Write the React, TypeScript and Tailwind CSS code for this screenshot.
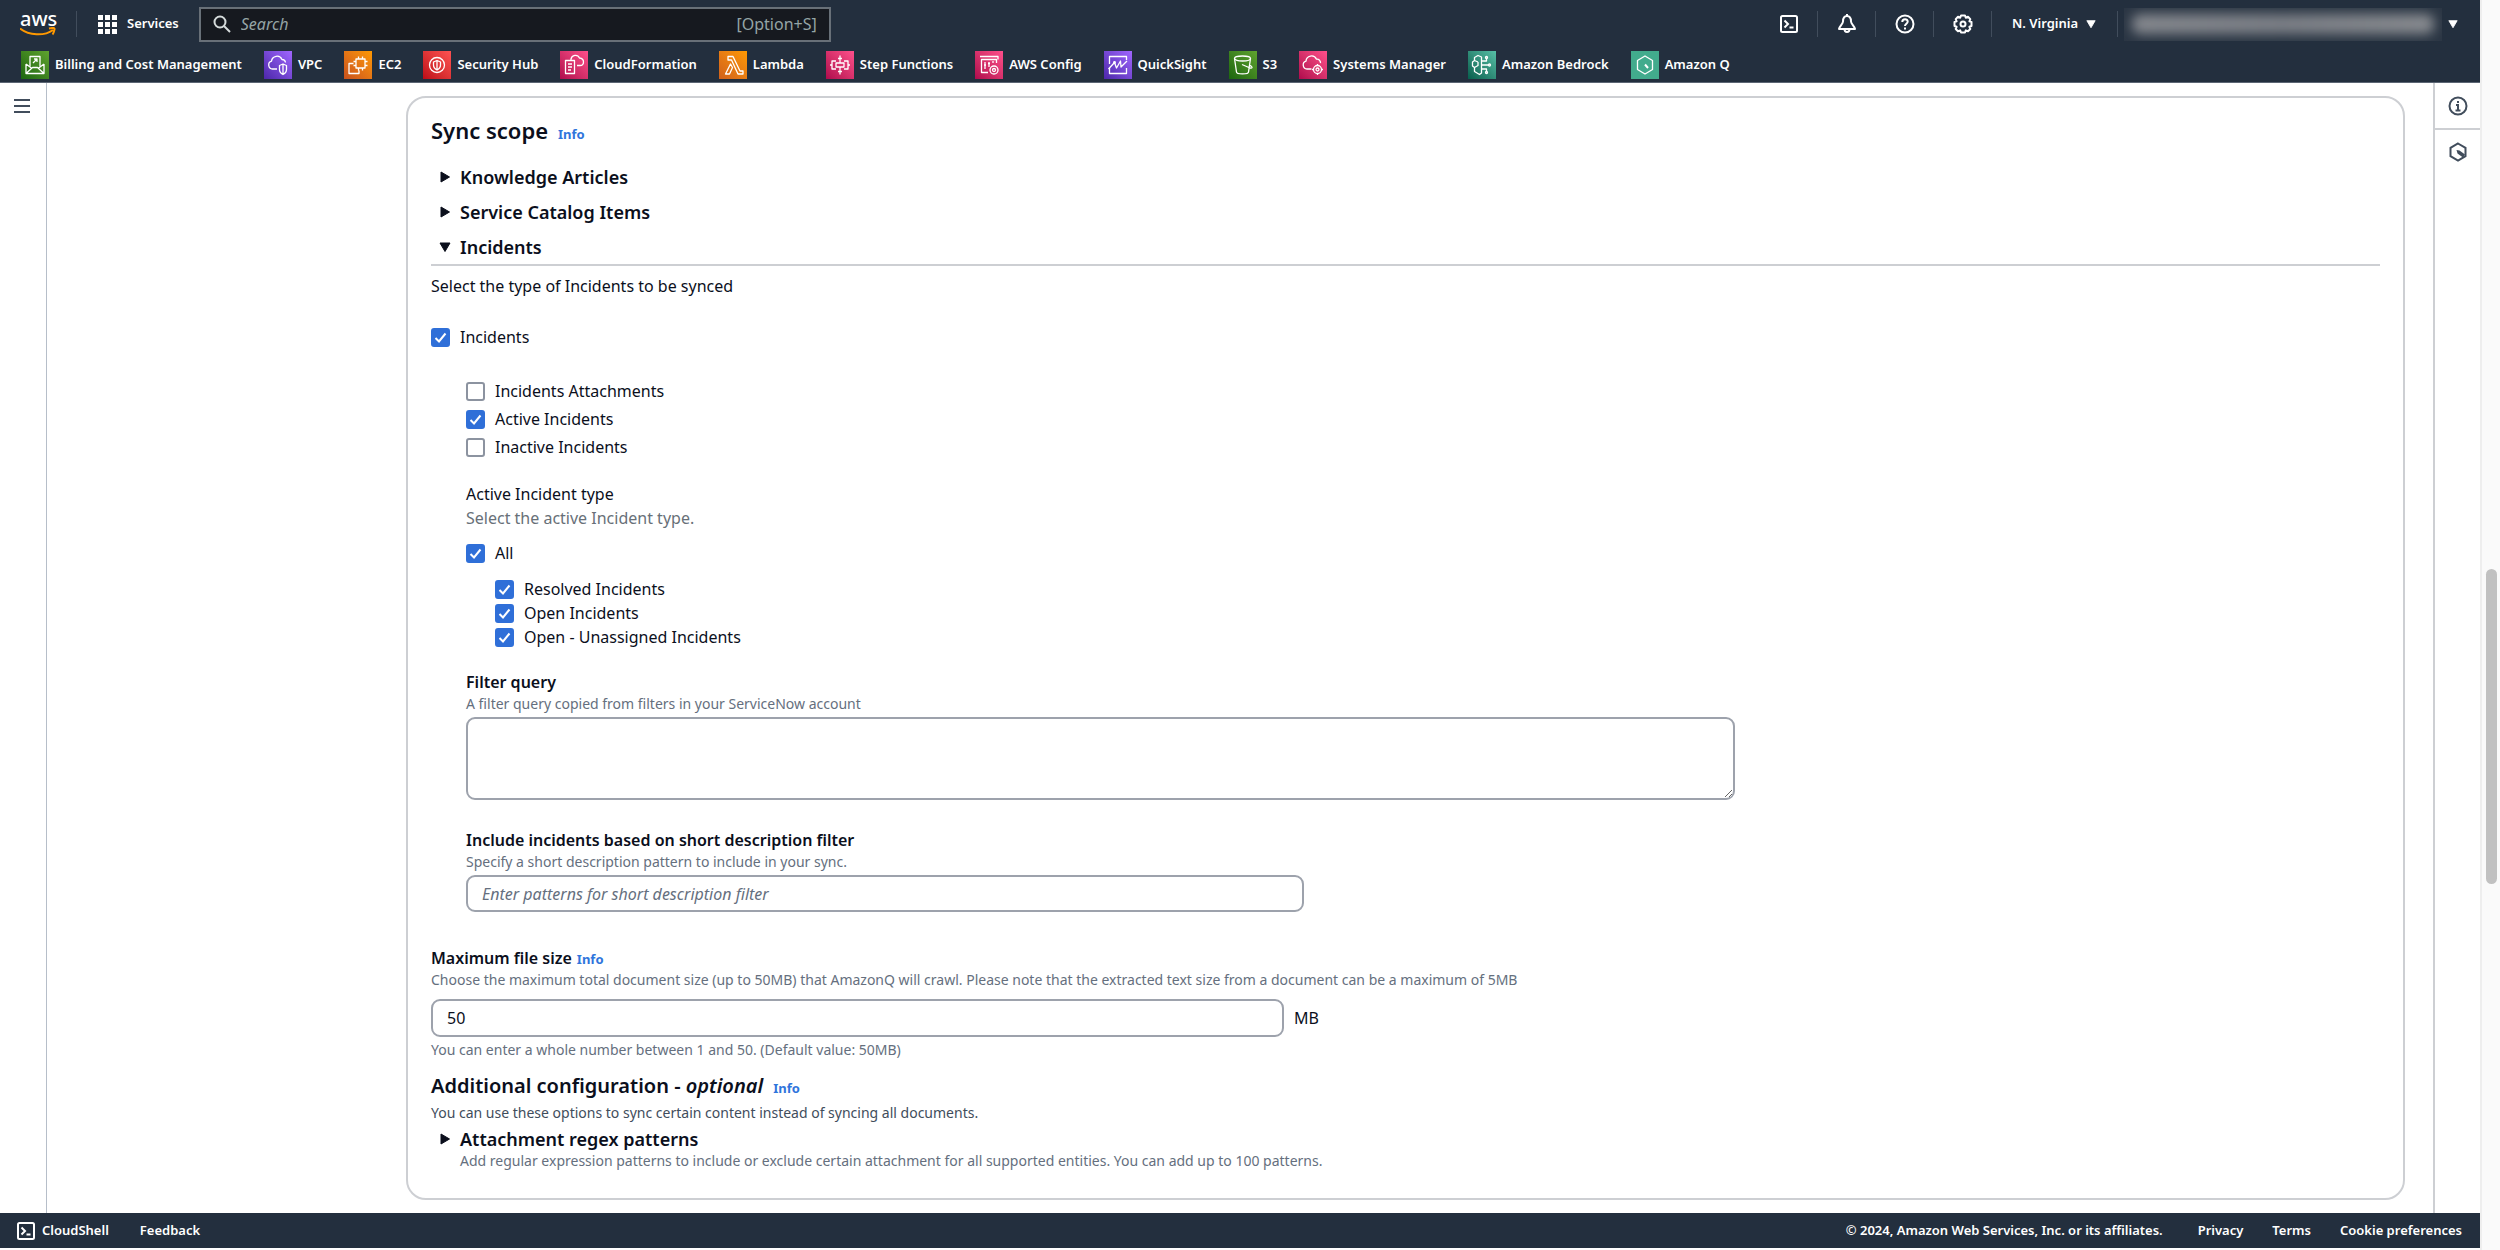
import { useState } from 'react';
import type { ReactNode } from 'react';

const services = [
  { name: 'Billing and Cost Management', bg: 'bg-linear-to-tr from-[#1b660f] to-[#5fa32f]', icon: 'billing' },
  { name: 'VPC', bg: 'bg-linear-to-tr from-[#4d27aa] to-[#a166ff]', icon: 'vpc' },
  { name: 'EC2', bg: 'bg-linear-to-tr from-[#c8511b] to-[#f90]', icon: 'ec2' },
  { name: 'Security Hub', bg: 'bg-linear-to-tr from-[#bd0816] to-[#ff5252]', icon: 'securityHub' },
  { name: 'CloudFormation', bg: 'bg-linear-to-tr from-[#b0084d] to-[#ff4f8b]', icon: 'cloudFormation' },
  { name: 'Lambda', bg: 'bg-linear-to-tr from-[#d0601a] to-[#f90]', icon: 'lambda' },
  { name: 'Step Functions', bg: 'bg-linear-to-tr from-[#b0084d] to-[#ff4f8b]', icon: 'stepFunctions' },
  { name: 'AWS Config', bg: 'bg-linear-to-tr from-[#b0084d] to-[#ff4f8b]', icon: 'config' },
  { name: 'QuickSight', bg: 'bg-linear-to-tr from-[#4d27aa] to-[#a166ff]', icon: 'quickSight' },
  { name: 'S3', bg: 'bg-linear-to-tr from-[#1b660f] to-[#5fa32f]', icon: 's3' },
  { name: 'Systems Manager', bg: 'bg-linear-to-tr from-[#b0084d] to-[#ff4f8b]', icon: 'systemsManager' },
  { name: 'Amazon Bedrock', bg: 'bg-linear-to-tr from-[#055f4e] to-[#56c0a7]', icon: 'bedrock' },
  { name: 'Amazon Q', bg: 'bg-[#42ab8d]', icon: 'q' },
];

const serviceIcons: Record<string, ReactNode> = {
  billing: (
    <>
      <path d="M5 13v9.500h18V13M5 13l6 4.500M23 13l-6 4.500M5 22.500l6.500-6h5l6.500 6" />
      <path d="M9 15.500V5.500h10v10M12 12l4-4M13 8h3v3" />
    </>
  ),
  vpc: (
    <>
      <path d="M13 18H8.500a4 4 0 0 1-1-7.800 5.500 5.500 0 0 1 10.500-1.700 3.500 3.500 0 0 1 3.500 3" />
      <path d="M15.500 14.500l3.500-1.500 3.500 1.500v4c0 2.500-1.500 4-3.500 5-2-1-3.500-2.500-3.500-5zM19 13v10" />
    </>
  ),
  ec2: (
    <>
      <rect x="12" y="8" width="9" height="9" />
      <path d="M14.500 8V5.500M18.500 8V5.500M14.500 19.500V17M18.500 19.500V17M12 10.500H9.500M12 14.500H9.500M23.500 10.500H21M23.500 14.500H21M9.500 12.500H5v10h10v-3" />
    </>
  ),
  securityHub: (
    <>
      <circle cx="14" cy="14" r="7.500" />
      <path d="M10.500 11l3.500-1.500 3.500 1.500v3c0 2.500-1.500 4-3.500 5-2-1-3.500-2.500-3.500-5zM14 9.500V19" />
    </>
  ),
  cloudFormation: (
    <>
      <path d="M5.500 9.500h9v13h-9zM8 13h4M8 16h4M8 19h3" />
      <path d="M11 9.500V8a4.500 4.500 0 0 1 8.500-1c3 .3 4 2 4 4 0 2.500-1.500 3.500-3.500 3.500h-3" />
    </>
  ),
  lambda: <path d="M9 5.500h5l7 14.500h3v3h-5l-6.500-14H9zM11.500 13L6.500 23h4l3-6.500z" />,
  stepFunctions: (
    <>
      <rect x="10" y="12" width="8" height="4" />
      <path d="M14 4.500v3M14 20.500v3M12 7.500h4M12 20.500h4M14 7.500V12M14 16v4.500M10 10H6v8h4M18 10h4v8h-4M4 14h2M22 14h2" />
    </>
  ),
  config: (
    <>
      <path d="M13 21.500H6.500v-13h15V12M5 5.500h18v3M10 11v7M14 11v5M9 14h2M13 12.500h2M18 10v2" />
      <circle cx="19" cy="19" r="4" />
      <circle cx="19" cy="19" r="1.500" />
    </>
  ),
  quickSight: (
    <>
      <path d="M22.500 17v5.500h-17V17M5.500 13V5.500h17V9" />
      <path d="M4.500 18l6-6.500 2 5.500 4-7 .5 6 6-6" />
      <circle cx="10.500" cy="11.500" r=".8" />
    </>
  ),
  s3: (
    <>
      <ellipse cx="13.500" cy="7.500" rx="8" ry="2.500" />
      <path d="M5.500 7.500l2 13.500c0 2.500 12 2.500 12 0l2-13.500M13 13.500l8 3.500c2 .5 3-.5 1-2l-2-1.500" />
    </>
  ),
  systemsManager: (
    <>
      <path d="M12.500 18H8a4 4 0 0 1-1-7.800 5.500 5.500 0 0 1 10.500-2 3.500 3.500 0 0 1 4 4" />
      <circle cx="18.500" cy="18.500" r="4" />
      <circle cx="18.500" cy="18.500" r="1.500" />
      <path d="M18.500 13v1.500M18.500 22.500V24M13 18.500h1.500M22.500 18.500H24" />
    </>
  ),
  bedrock: (
    <>
      <path d="M13.500 6v16l-2 1.500-5-3v-4l-2-1.500v-4l2-1.500v-3l3.500-2z" />
      <path d="M6.500 9.500L10 11M6.500 16.500l3.500-2v-3.500M13.500 10h5V7.500M13.500 14h7M13.500 18h5v2.500" />
      <circle cx="18.500" cy="6.500" r="1" />
      <circle cx="21.500" cy="14" r="1" />
      <circle cx="18.500" cy="21.500" r="1" />
    </>
  ),
  q: (
    <>
      <path d="M14 5l7.500 4.500v9L14 23l-7.500-4.500v-9z" />
      <path d="M14 13.500l3 3.500" strokeWidth="2" />
    </>
  ),
};

function ServiceIcon({ icon, bg }: { icon: string; bg: string }) {
  return (
    <span className={`block size-7 ${bg}`}>
      <svg viewBox="0 0 28 28" className="size-7" fill="none" stroke="#fff" strokeWidth="1.300" strokeLinejoin="round">
        {serviceIcons[icon]}
      </svg>
    </span>
  );
}

function TerminalIcon() {
  return (
    <svg viewBox="0 0 18 18" className="size-[18px]" fill="none" stroke="currentColor" strokeWidth="2">
      <rect x="1" y="1" width="16" height="16" rx="1.500" />
      <path d="M4.500 5.500L8 9l-3.500 3.500M9.500 12.500h4" />
    </svg>
  );
}

function Caret({ open = false, className = 'size-[10px]' }: { open?: boolean; className?: string }) {
  return (
    <svg viewBox="0 0 12 12" className={className} fill="currentColor" stroke="currentColor" strokeWidth="1" strokeLinejoin="round">
      {open ? <path d="M1 2h10l-5 8.500z" /> : <path d="M2 1v10l8.500-5z" />}
    </svg>
  );
}

function HeaderButton({ label, children }: { label: string; children: ReactNode }) {
  return (
    <button aria-label={label} className="flex w-[58px] h-[26px] items-center justify-center border-r border-[#414d5c]">
      {children}
    </button>
  );
}

function Info() {
  return <a href="#info" className="text-[13px] leading-none font-bold text-[#2f75dc]">Info</a>;
}

function Checkbox({ label, checked = false }: { label: string; checked?: boolean }) {
  const [on, setOn] = useState(checked);
  return (
    <label className="flex items-center gap-[10px]">
      <span className="grid size-[19px]">
        <input
          type="checkbox"
          checked={on}
          onChange={(e) => setOn(e.target.checked)}
          className="col-start-1 row-start-1 size-[19px] appearance-none rounded-[3px] border-2 border-[#8c93a0] bg-white checked:border-[#2f6fd8] checked:bg-[#2f6fd8]"
        />
        {on && (
          <svg viewBox="0 0 19 19" className="pointer-events-none col-start-1 row-start-1 size-[19px]" fill="none" stroke="#fff" strokeWidth="2">
            <path d="M4.500 10l3.500 3.500 6.500-8" />
          </svg>
        )}
      </span>
      {label}
    </label>
  );
}

function ExpandRow({ title, open = false }: { title: string; open?: boolean }) {
  return (
    <button aria-expanded={open} className="flex h-[35px] items-center gap-[9px] pl-2 text-lg font-semibold">
      <Caret open={open} className="size-3" />
      {title}
    </button>
  );
}

function TopBar() {
  return (
    <header className="bg-[#232f3e] text-[13px] font-semibold text-white">
      <div className="flex h-12 items-center pr-[22px]">
        <a href="#home" aria-label="AWS home" className="flex w-[77px] h-[26px] flex-col items-start border-r border-[#414d5c] pl-5">
          <span className="text-[20px] leading-[16px] font-medium">aws</span>
          <svg viewBox="0 0 36 10" className="h-[10px] w-9" fill="none" stroke="#f90" strokeWidth="2">
            <path d="M0 1.500c9 7 24 8 33 1.500M29 1.500c4-1 6-.5 5.500 1S34 6 32.500 7.500" />
          </svg>
        </a>
        <button className="flex items-center gap-[10px] pl-5">
          <svg viewBox="0 0 20 20" className="size-5" fill="#fff">
            {[1, 8, 15].map((y) => [1, 8, 15].map((x) => <rect key={`${x}-${y}`} x={x} y={y} width="5" height="5" />))}
          </svg>
          Services
        </button>
        <div className="ml-5 flex h-[35px] w-[632px] items-center gap-[10px] border-2 border-[#687078] bg-[#16191f] px-3">
          <svg viewBox="0 0 18 18" className="size-[18px]" fill="none" stroke="#d5dbdb" strokeWidth="2">
            <circle cx="7" cy="7" r="5.500" />
            <path d="M11 11l6 6" />
          </svg>
          <input aria-label="Search" placeholder="Search" className="min-w-0 flex-1 bg-transparent text-base font-normal outline-none placeholder:text-[#95a5a6] placeholder:italic" />
          <span className="text-base font-normal text-[#95a5a6]">[Option+S]</span>
        </div>
        <div className="ml-auto flex items-center">
          <HeaderButton label="CloudShell"><TerminalIcon /></HeaderButton>
          <HeaderButton label="Notifications">
            <svg viewBox="0 0 20 20" className="size-5" fill="none" stroke="#fff" strokeWidth="2" strokeLinejoin="round">
              <path d="M10 2c-3 0-4 2.500-4 5.500C6 10 2.500 12 2 15h16c-.500-3-4-5-4-7.500C14 4.500 13 2 10 2zM7.500 15c0 4 5 4 5 0M10 0v2" />
            </svg>
          </HeaderButton>
          <HeaderButton label="Help">
            <svg viewBox="0 0 20 20" className="size-5" fill="none" stroke="#fff" strokeWidth="2">
              <circle cx="10" cy="10" r="8.500" />
              <path d="M7.300 8c0-3.800 5.600-3.500 5.400-.3-.1 2-2.700 2-2.700 4.300M10 13.500v2" />
            </svg>
          </HeaderButton>
          <HeaderButton label="Settings">
            <svg viewBox="0 0 20 20" className="size-5" fill="none" stroke="#fff" strokeWidth="2" strokeLinejoin="round">
              <path d="M8 1.500h4l.8 2.200 2.200-.9 2.300 2.300-.9 2.200 2.100.7v4l-2.100.8.9 2.200-2.300 2.300-2.200-.9-.8 2.100H8l-.8-2.100-2.200.9L2.700 15l.9-2.200-2.100-.8V8l2.100-.7-.9-2.200L5 2.800l2.200.9z" />
              <circle cx="10" cy="10" r="2.500" />
            </svg>
          </HeaderButton>
          <button className="flex h-[26px] w-[126px] items-center justify-between border-r border-[#414d5c] pl-5 pr-[21px] text-[13px]">
            N. Virginia
            <Caret open />
          </button>
          <button aria-label="Account" className="ml-[6px] flex items-center gap-[6px]">
            <span className="flex h-[33px] w-[318px] items-center overflow-hidden bg-[#2b3644] px-2">
              <span className="h-5 w-full rounded-lg bg-linear-to-r from-[#85888e] via-[#7b7f86] to-[#888b90] blur-[6px]" />
            </span>
            <Caret open />
          </button>
        </div>
      </div>
      <nav className="flex h-[35px] items-center gap-[22px] border-b border-[#5c6674] pl-[21px]">
        {services.map((s) => (
          <a key={s.name} href={`#${s.icon}`} className="flex items-center gap-[6px] whitespace-nowrap">
            <ServiceIcon icon={s.icon} bg={s.bg} />
            {s.name}
          </a>
        ))}
      </nav>
    </header>
  );
}

function SyncScope() {
  return (
    <section className="rounded-[20px] border-2 border-[#cdcfd3] bg-white px-[23px] pt-[17px] pb-[27px] text-base leading-6 text-[#0b0f1c]">
      <div className="flex items-baseline gap-[10px]">
        <h2 className="text-[22px] leading-[30px] font-semibold">Sync scope</h2>
        <Info />
      </div>

      <div className="mt-[14px] flex flex-col items-start">
        <ExpandRow title="Knowledge Articles" />
        <ExpandRow title="Service Catalog Items" />
        <ExpandRow title="Incidents" open />
      </div>

      <div className="border-t-2 border-[#cdcfd3] pt-2">
        <p>Select the type of Incidents to be synced</p>
        <div className="mt-[27px]">
          <Checkbox label="Incidents" checked />
        </div>

        <div className="pl-[35px]">
          <div className="mt-7 grid auto-rows-[28px]">
            <Checkbox label="Incidents Attachments" />
            <Checkbox label="Active Incidents" checked />
            <Checkbox label="Inactive Incidents" />
          </div>

          <fieldset className="mt-[21px]">
            <legend>Active Incident type</legend>
            <p className="text-[#687078]">Select the active Incident type.</p>
            <div className="mt-[11px]">
              <Checkbox label="All" checked />
            </div>
            <div className="mt-3 pl-[29px]">
              <Checkbox label="Resolved Incidents" checked />
              <Checkbox label="Open Incidents" checked />
              <Checkbox label="Open - Unassigned Incidents" checked />
            </div>
          </fieldset>

          <div className="mt-[21px] flex flex-col">
            <label htmlFor="query" className="font-semibold">Filter query</label>
            <p className="text-sm leading-5 text-[#656f7e]">A filter query copied from filters in your ServiceNow account</p>
            <textarea id="query" className="mt-[3px] h-[83px] w-[1269px] max-w-full rounded-[9px] border-2 border-[#9da2ac] px-3" />
          </div>

          <div className="mt-7 flex flex-col">
            <label htmlFor="pattern" className="font-semibold">Include incidents based on short description filter</label>
            <p className="text-sm leading-5 text-[#656f7e]">Specify a short description pattern to include in your sync.</p>
            <input
              id="pattern"
              placeholder="Enter patterns for short description filter"
              className="mt-[3px] h-[37px] w-[838px] max-w-full rounded-[9px] border-2 border-[#9da2ac] px-[14px] placeholder:text-[#656f7e] placeholder:italic"
            />
          </div>
        </div>
      </div>

      <div className="mt-[34px]">
        <div className="flex items-baseline gap-[5px]">
          <label htmlFor="size" className="font-semibold">Maximum file size</label>
          <Info />
        </div>
        <p className="text-sm leading-5 text-[#656f7e]">
          Choose the maximum total document size (up to 50MB) that AmazonQ will crawl. Please note that the extracted text size from a document can be a maximum of 5MB
        </p>
        <div className="mt-[9px] flex items-center gap-[10px]">
          <input id="size" defaultValue="50" className="h-[38px] w-[853px] rounded-[9px] border-2 border-[#9da2ac] px-[14px]" />
          <span>MB</span>
        </div>
        <p className="mt-[3px] text-sm leading-5 text-[#656f7e]">You can enter a whole number between 1 and 50. (Default value: 50MB)</p>
      </div>

      <div className="mt-3 flex items-baseline gap-[10px]">
        <h3 className="text-xl leading-7 font-semibold">Additional configuration - <i>optional</i></h3>
        <Info />
      </div>
      <p className="mt-[3px] text-sm leading-5 text-[#414d5c]">You can use these options to sync certain content instead of syncing all documents.</p>
      <button aria-expanded="false" className="mt-1 flex items-center gap-[9px] pl-2 text-lg leading-6 font-semibold">
        <Caret className="size-3" />
        Attachment regex patterns
      </button>
      <p className="pl-[29px] text-sm leading-5 text-[#656f7e]">
        Add regular expression patterns to include or exclude certain attachment for all supported entities. You can add up to 100 patterns.
      </p>
    </section>
  );
}

function Footer() {
  return (
    <footer className="mb-[2px] flex h-[35px] items-center bg-[#232f3e] pr-[18px] pl-[17px] text-[13px] font-semibold text-white">
      <button className="flex items-center gap-[7px]">
        <TerminalIcon />
        CloudShell
      </button>
      <a href="#feedback" className="ml-[31px]">Feedback</a>
      <span className="ml-auto">© 2024, Amazon Web Services, Inc. or its affiliates.</span>
      <a href="#privacy" className="ml-[35px]">Privacy</a>
      <a href="#terms" className="ml-[29px]">Terms</a>
      <a href="#cookies" className="ml-[29px]">Cookie preferences</a>
    </footer>
  );
}

export default function App() {
  return (
    <div className="flex min-h-screen bg-white font-['Noto_Sans','Open_Sans',sans-serif]">
      <div className="flex min-w-0 flex-1 flex-col">
        <TopBar />
        <div className="flex flex-1">
          <aside className="flex w-[47px] flex-col items-start border-r border-[#b6bec9] pt-[15px] pl-[14px]">
            <button aria-label="Open navigation">
              <svg viewBox="0 0 16 16" className="size-4" stroke="#414d5c" strokeWidth="2">
                <path d="M0 2h16M0 8h16M0 14h16" />
              </svg>
            </button>
          </aside>
          <main className="min-w-0 flex-1 pt-[13px] pr-7 pb-3 pl-[359px]">
            <SyncScope />
          </main>
          <aside className="w-[47px] border-l-2 border-[#cdcfd3] text-[#414d5c]">
            <button aria-label="Info panel" className="flex h-[47px] w-full items-center justify-center border-b-2 border-[#cdcfd3]">
              <svg viewBox="0 0 20 20" className="size-5" fill="none" stroke="currentColor" strokeWidth="2">
                <circle cx="10" cy="10" r="8.500" />
                <path d="M8 9h2v5.500M7.500 14.500h5M10 5v2" />
              </svg>
            </button>
            <button aria-label="Amazon Q" className="flex h-[43px] w-full items-center justify-center">
              <svg viewBox="0 0 20 20" className="size-5" fill="none" stroke="currentColor" strokeWidth="2">
                <path d="M10 1.500l7.500 4.300v8.400L10 18.500l-7.500-4.300V5.800z" />
                <path d="M8.500 8l3 .5 5.500 4-2 3-5.500-4z" fill="currentColor" stroke="none" />
              </svg>
            </button>
          </aside>
        </div>
        <Footer />
      </div>
      <div className="w-5 border-l-2 border-[#eee] bg-[#fafafa] pt-[569px] pl-1">
        <div className="h-[315px] w-[11px] rounded-full bg-[#c1c1c1]" />
      </div>
    </div>
  );
}
